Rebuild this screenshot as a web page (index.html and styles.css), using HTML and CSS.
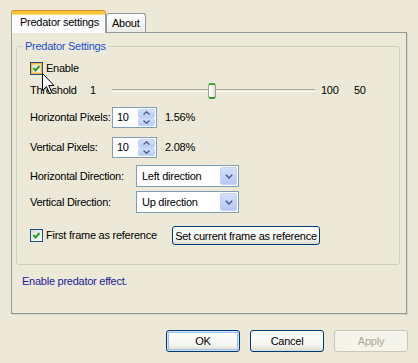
FILE: index.html
```html
<!DOCTYPE html>
<html lang="en">
<head>
    <meta charset="UTF-8">
    <meta name="viewport" content="width=device-width, initial-scale=1.0">
    <title>Predator settings</title>
    <link rel="stylesheet" href="styles.css">
</head>
<body>

    <div class="dialog">
        <div class="tabs">
            <div class="tab active">Predator settings</div>
            <div class="tab">About</div>
        </div>

        <div class="panel">
            <div class="group">
                <span class="group-title">Predator Settings</span>

                <div class="row row-enable">
                    <span class="checkbox hover">
                        <svg width="11" height="11" viewBox="0 0 11 11"><polyline points="2.5,5 4.5,7.5 8.5,3" fill="none" stroke="#21a121" stroke-width="2"/></svg>
                    </span>
                    <span>Enable</span>
                </div>

                <div class="row row-slider">
                    <span class="lbl-threshold">Threshold</span>
                    <span class="min">1</span>
                    <div class="track">
                        <span class="thumb" style="left: 96px;"></span>
                    </div>
                    <span class="max">100</span>
                    <span>50</span>
                </div>

                <div class="row row-pixels">
                    <span class="lbl-pixels">Horizontal Pixels:</span>
                    <div class="spin">
                        <span class="spin-value">10</span>
                        <div class="spin-buttons">
                            <span class="spin-btn"><svg width="7" height="4" viewBox="0 0 7 4"><polyline points="0.5,3.5 3.5,0.8 6.5,3.5" fill="none" stroke="#4d6185" stroke-width="1.4"/></svg></span>
                            <span class="spin-btn"><svg width="7" height="4" viewBox="0 0 7 4"><polyline points="0.5,0.5 3.5,3.2 6.5,0.5" fill="none" stroke="#4d6185" stroke-width="1.4"/></svg></span>
                        </div>
                    </div>
                    <span class="pct">1.56%</span>
                </div>

                <div class="row row-pixels row-vpixels">
                    <span class="lbl-pixels">Vertical Pixels:</span>
                    <div class="spin">
                        <span class="spin-value">10</span>
                        <div class="spin-buttons">
                            <span class="spin-btn"><svg width="7" height="4" viewBox="0 0 7 4"><polyline points="0.5,3.5 3.5,0.8 6.5,3.5" fill="none" stroke="#4d6185" stroke-width="1.4"/></svg></span>
                            <span class="spin-btn"><svg width="7" height="4" viewBox="0 0 7 4"><polyline points="0.5,0.5 3.5,3.2 6.5,0.5" fill="none" stroke="#4d6185" stroke-width="1.4"/></svg></span>
                        </div>
                    </div>
                    <span class="pct">2.08%</span>
                </div>

                <div class="row row-dir">
                    <span class="lbl-dir">Horizontal Direction:</span>
                    <div class="select">
                        <span class="select-value">Left direction</span>
                        <span class="select-btn"><svg width="8" height="5" viewBox="0 0 8 5"><polyline points="0.8,0.8 4,4 7.2,0.8" fill="none" stroke="#4d6185" stroke-width="1.6"/></svg></span>
                    </div>
                </div>

                <div class="row row-dir row-vdir">
                    <span class="lbl-dir">Vertical Direction:</span>
                    <div class="select">
                        <span class="select-value">Up direction</span>
                        <span class="select-btn"><svg width="8" height="5" viewBox="0 0 8 5"><polyline points="0.8,0.8 4,4 7.2,0.8" fill="none" stroke="#4d6185" stroke-width="1.6"/></svg></span>
                    </div>
                </div>

                <div class="row row-frame">
                    <div class="frame-check">
                        <span class="checkbox">
                            <svg width="11" height="11" viewBox="0 0 11 11"><polyline points="2.5,5 4.5,7.5 8.5,3" fill="none" stroke="#21a121" stroke-width="2"/></svg>
                        </span>
                        <span>First frame as reference</span>
                    </div>
                    <button class="btn btn-wide">Set current frame as reference</button>
                </div>
            </div>

            <p class="hint">Enable predator effect.</p>
        </div>

        <div class="buttons">
            <button class="btn btn-default">OK</button>
            <button class="btn">Cancel</button>
            <button class="btn" disabled>Apply</button>
        </div>

        <!-- mouse pointer over the Enable box -->
        <svg class="pointer" width="13" height="22" viewBox="0 0 13 22">
            <polygon points="0.5,0.5 0.5,17.5 4.5,13.5 7.5,20.5 9.8,19.5 6.8,12.5 12,12.5" fill="#fff" stroke="#000" stroke-width="1"/>
        </svg>
    </div>

</body>
</html>
```

FILE: styles.css
```css
body {
    margin: 0;
    background-color: #ece9d8;
    font-family: "Liberation Sans", Arial, sans-serif;
    font-size: 11px;
    line-height: 13px;
    letter-spacing: -0.25px;
    color: #000;
}
.dialog {
    position: relative;
    width: 418px;
    height: 363px;
    padding-top: 11px;
    box-sizing: border-box;
}

/* tabs */
.tabs {
    display: flex;
    align-items: flex-end;
    margin-left: 11px;
    margin-bottom: -1px;
}
.tab {
    height: 19px;
    padding: 0 5px;
    border: 1px solid #919b9c;
    border-bottom: none;
    border-radius: 3px 3px 0 0;
    background: linear-gradient(#ffffff, #ecebe6);
    line-height: 18px;
    box-sizing: border-box;
    margin-bottom: 1px;
}
.tab.active {
    position: relative;
    z-index: 1;
    width: 95px;
    height: 22px;
    padding-left: 8px;
    margin-bottom: 0;
    background: #fcfcfe;
    border-top: 3px solid #ffc73c;
    box-shadow: inset 0 1px 0 #ffd86b, 0 -1px 0 #e68b2c;
    line-height: 17px;
}

/* panel */
.panel {
    width: 396px;
    height: 282px;
    margin-left: 11px;
    padding: 13px 6px 0 4px;
    border: 1px solid #919b9c;
    box-shadow: 1px 1px 0 #d6d3c4;
    box-sizing: border-box;
}
.group {
    height: 219px;
    padding: 0 13px;
    border: 1px solid #d0d0bf;
    border-radius: 3px;
    box-sizing: border-box;
}
.group-title {
    display: table;
    margin: -7px 0 0 -7px;
    padding: 0 2px;
    background-color: #ece9d8;
    color: #1c4fd0;
}
.row {
    display: flex;
    align-items: center;
}
.row-enable {
    height: 13px;
    margin-top: 9px;
}
.row-slider {
    height: 17px;
    margin-top: 7px;
}
.row-pixels {
    height: 21px;
    margin-top: 8px;
}
.row-vpixels {
    margin-top: 9px;
}
.row-dir {
    height: 22px;
    margin-top: 7px;
}
.row-vdir {
    margin-top: 4px;
}
.row-frame {
    height: 19px;
    margin-top: 13px;
}

/* checkbox */
.checkbox {
    display: flex;
    align-items: center;
    justify-content: center;
    width: 13px;
    height: 13px;
    margin-right: 3px;
    border: 1px solid #1c5180;
    background: linear-gradient(135deg, #dcdcd7, #ffffff);
    box-sizing: border-box;
}
.checkbox.hover {
    box-shadow: inset 0 0 0 1px #f8b33e, inset 0 0 0 2px #fcd789;
}
.frame-check {
    display: flex;
    align-items: center;
    width: 142px;
}

/* trackbar */
.lbl-threshold {
    width: 60px;
}
.min {
    width: 22px;
}
.track {
    position: relative;
    width: 203px;
    height: 1px;
    border-top: 1px solid #aca899;
    border-bottom: 1px solid #ffffff;
}
.thumb {
    position: absolute;
    top: -7px;
    width: 8px;
    height: 16px;
    border: 1px solid #a0a090;
    border-top: 2px solid #2eaf2e;
    border-bottom: 2px solid #21a121;
    border-radius: 3px;
    background: linear-gradient(90deg, #ffffff, #f3f3ef 60%, #d8d8d0);
    box-sizing: border-box;
}
.max {
    width: 33px;
    margin-left: 6px;
}

/* spin box */
.lbl-pixels {
    width: 82px;
}
.spin {
    display: flex;
    width: 45px;
    height: 21px;
    border: 1px solid #7f9db9;
    background-color: #fff;
    box-sizing: border-box;
}
.spin-value {
    flex: 1;
    padding-left: 4px;
    line-height: 19px;
}
.spin-buttons {
    display: flex;
    flex-direction: column;
    width: 17px;
    margin: 1px;
}
.spin-btn {
    flex: 1;
    display: flex;
    align-items: center;
    justify-content: center;
    border: 1px solid #c3d3fd;
    border-radius: 2px;
    background: linear-gradient(#d4e0fe, #b9cbf6);
}
.pct {
    margin-left: 8px;
}

/* combo box */
.lbl-dir {
    width: 106px;
}
.select {
    display: flex;
    width: 103px;
    height: 22px;
    border: 1px solid #7f9db9;
    background-color: #fff;
    box-sizing: border-box;
}
.select-value {
    flex: 1;
    padding-left: 5px;
    line-height: 20px;
}
.select-btn {
    display: flex;
    align-items: center;
    justify-content: center;
    width: 15px;
    margin: 1px;
    border: 1px solid #c3d3fd;
    border-radius: 2px;
    background: linear-gradient(#d4e0fe, #b4c7f6);
}

/* buttons */
.btn {
    height: 22px;
    padding: 0;
    font-family: inherit;
    font-size: 11px;
    letter-spacing: -0.25px;
    color: #000;
    border: 1px solid #003c74;
    border-radius: 3px;
    background: linear-gradient(#ffffff, #f4f4f0 70%, #dcd8cc);
    box-sizing: border-box;
}
.btn-wide {
    width: 148px;
    height: 19px;
}
.btn-default {
    box-shadow: inset 0 0 0 1px #cee0fb, inset 0 0 0 2px #a5c0ef;
}
.btn:disabled {
    color: #aca899;
    border-color: #c9c7ba;
    background: #f5f4ea;
}
.hint {
    margin: 10px 0 0 6px;
    color: #1c1c9a;
}
.buttons {
    display: flex;
    justify-content: flex-end;
    gap: 10px;
    margin-top: 16px;
    padding-right: 10px;
}
.buttons .btn {
    width: 74px;
}

.pointer {
    position: absolute;
    left: 42px;
    top: 73px;
}
```
